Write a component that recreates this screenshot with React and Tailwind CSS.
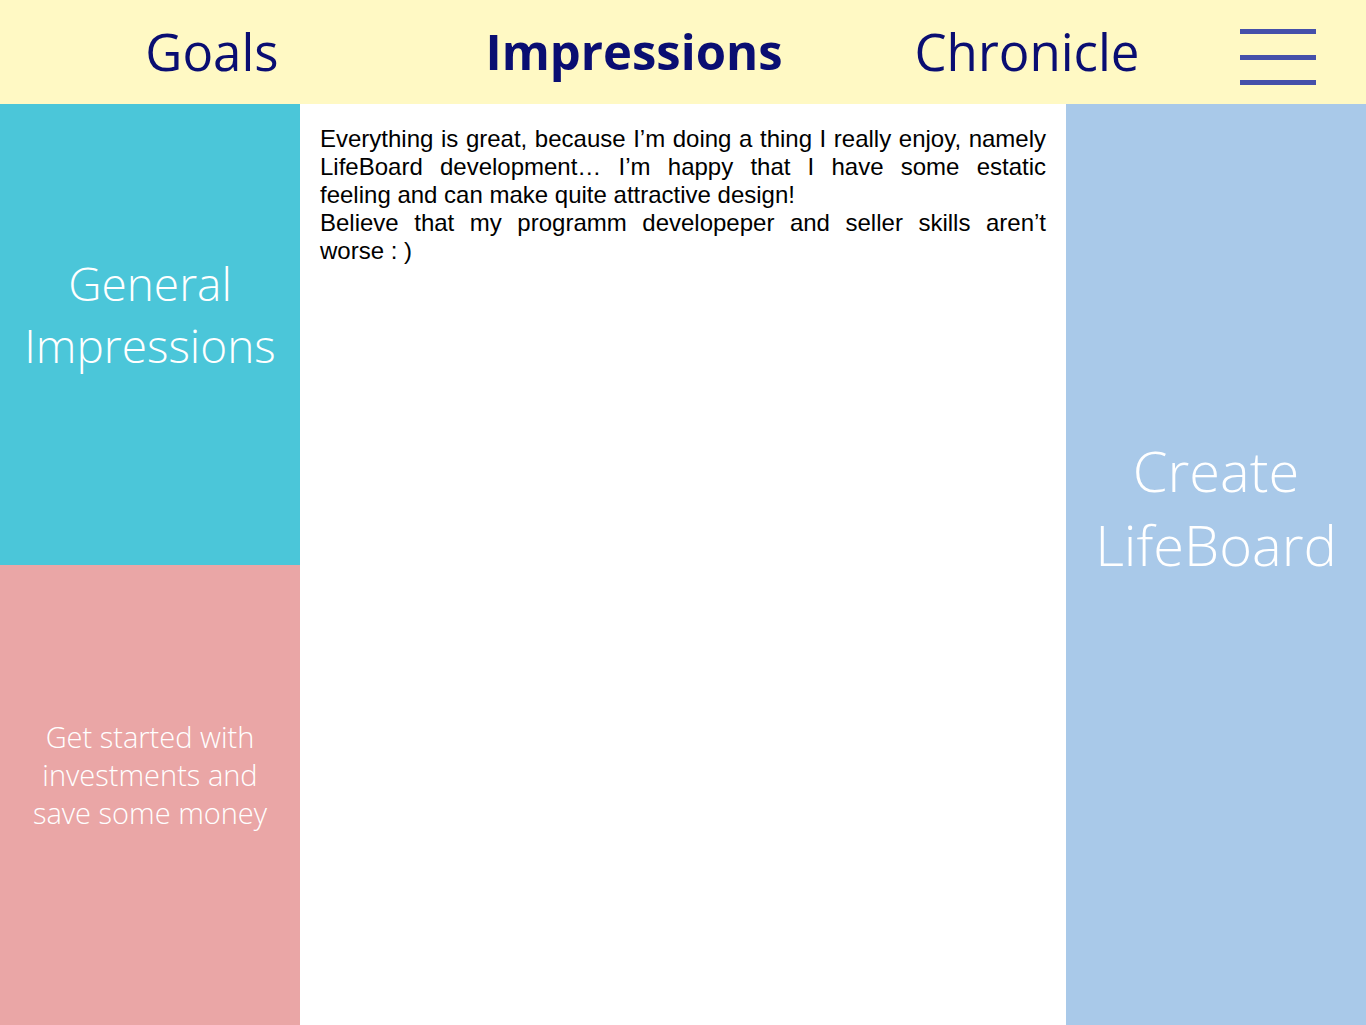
const tab = "pb-0.5 leading-[64px] whitespace-nowrap cursor-pointer";

export default function App() {
  return (
    <div className="flex min-h-screen flex-col bg-white font-['Open_Sans','Noto_Sans',sans-serif]">
      <header className="flex h-[104px] items-center bg-[#fff9c4] text-[#0a0e72]">
        <nav className="flex flex-1 items-center">
          <button className={tab + " w-[424px] text-[51px]"}>Goals</button>
          <button className={tab + " flex-1 text-[49px] font-bold"}>Impressions</button>
          <button className={tab + " w-[396px] pr-[30px] text-[51px]"}>Chronicle</button>
        </nav>
        <button aria-label="Menu" className="mr-[50px] flex w-[76px] flex-col justify-between h-14 mt-[10px] cursor-pointer">
          <span className="h-[5px] w-full bg-[#4550aa]" />
          <span className="h-[5px] w-full bg-[#4550aa]" />
          <span className="h-[5px] w-full bg-[#4550aa]" />
        </button>
      </header>
      <div className="flex flex-1">
        <aside className="flex w-[300px] flex-col text-white">
          <button className="flex-1 bg-[#4bc6d9] pb-10 text-[46px] leading-[62px] font-light cursor-pointer">
            General<br />Impressions
          </button>
          <button className="flex-1 bg-[#eaa6a6] pb-10 text-[29px] leading-[38px] font-light cursor-pointer">
            Get started with<br />investments and<br />save some money
          </button>
        </aside>
        <main className="flex-1 px-5 py-[21px] text-justify font-['Liberation_Sans',sans-serif] text-[24px] leading-[28px] text-black">
          <p>Everything is great, because I’m doing a thing I really enjoy, namely LifeBoard development… I’m happy that I have some estatic feeling&nbsp;and can make quite attractive design!</p>
          <p>Believe that my programm developeper and seller skills aren’t worse&nbsp;:&nbsp;)</p>
        </main>
        <button className="w-[300px] bg-[#a9c9e9] pb-[116px] text-[56px] leading-[74px] font-light text-white cursor-pointer">
          Create<br />LifeBoard
        </button>
      </div>
    </div>
  );
}
